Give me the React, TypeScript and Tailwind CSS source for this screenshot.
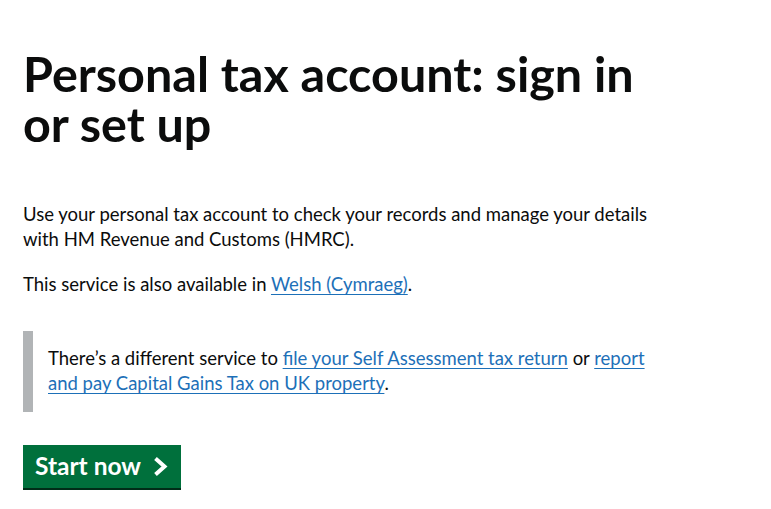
export default function App() {
    return (
        <div
            className="min-h-[509px] bg-white text-[#0b0c0c]"
            style={{ fontFamily: 'Lato, "Liberation Sans", Arial, sans-serif' }}
        >
            <main className="px-[23px] pt-[48px] pb-4">
                <div className="w-[700px]">
                    <h1 className="mb-[54px] whitespace-nowrap text-[48.5px] font-bold leading-[50px]">
                        Personal tax account: sign in
                        <br />
                        or set up
                    </h1>

                    <p className="mb-5 whitespace-nowrap text-[18.5px] leading-[25px]">
                        Use your personal tax account to check your records and manage your details
                        <br />
                        with HM Revenue and Customs (HMRC).
                    </p>

                    <p className="mb-5 text-[18.5px] leading-[25px]">
                        This service is also available in{" "}
                        <a href="#" className="text-[#1d70b8] underline underline-offset-[3px]">
                            Welsh (Cymraeg)
                        </a>
                        .
                    </p>

                    <div className="mt-[34px] whitespace-nowrap border-l-[10px] border-[#b1b4b6] pt-[15px] pb-[16px] pl-[15px] text-[18.5px] leading-[25px]">
                        There&rsquo;s a different service to{" "}
                        <a href="#" className="text-[#1d70b8] underline underline-offset-[3px]">
                            file your Self Assessment tax return
                        </a>{" "}
                        or{" "}
                        <a href="#" className="text-[#1d70b8] underline underline-offset-[3px]">
                            report
                            <br />
                            and pay Capital Gains Tax on UK property
                        </a>
                        .
                    </div>

                    <div className="mt-[33px]">
                        <a
                            href="#"
                            className="inline-flex h-[43px] items-center gap-[12px] bg-[#00703c] pl-[12px] pr-[13px] text-[24.5px] font-bold leading-none text-white shadow-[0_2px_0_#002d18]"
                        >
                            Start now
                            <svg width="15" height="19" viewBox="0 0 15 19" aria-hidden="true">
                                <path
                                    d="M2.5 1.5l9 8-9 8"
                                    fill="none"
                                    stroke="currentColor"
                                    strokeWidth="4"
                                />
                            </svg>
                        </a>
                    </div>
                </div>
            </main>
        </div>
    );
}
